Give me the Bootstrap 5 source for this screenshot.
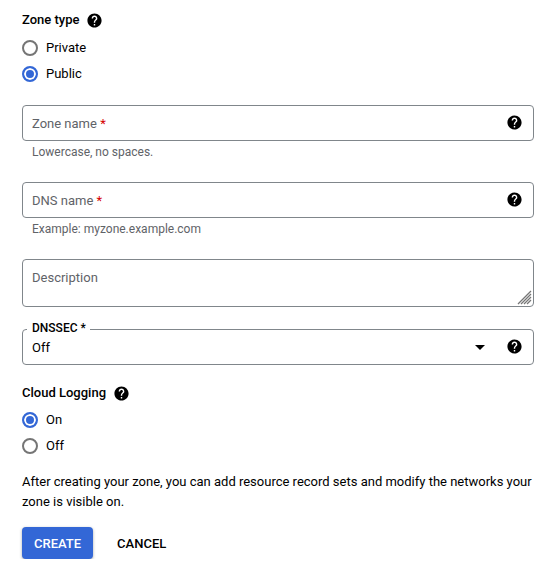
<!DOCTYPE html>
<html lang="en">
<head>
<meta charset="utf-8">
<title>Create a DNS zone</title>
<link href="https://cdn.jsdelivr.net/npm/bootstrap@5.3.0/dist/css/bootstrap.min.css" rel="stylesheet">
<style>
body{font-family:Roboto,"Liberation Sans",sans-serif;font-size:13px;line-height:20px;color:#000;background:#fff;}
.zone-form{padding:10px 11px 0 22px;}
.group-title{font-weight:500;height:20px;margin-bottom:8px;display:flex;align-items:center;gap:7px;}
.group-title .help-ico{margin-top:1px;}
.help-ico{width:17px;height:17px;fill:#000;flex:none;display:block;}
.radio-row{min-height:0;padding:0;margin:0 0 6px;height:20px;display:flex;align-items:center;gap:8px;}
.radio-row .form-check-input{float:none;margin:0;width:16px;height:16px;border:2px solid #757575;background:#fff;flex:none;}
.radio-row .form-check-input:checked{border-color:#3367d6;background:#3367d6;background-image:none;box-shadow:inset 0 0 0 2px #fff;}
.radio-row .form-check-label{font-size:13px;}
.zone-gap{margin-top:21px;}
.field-box{position:relative;}
.field-box .form-control,.field-box .form-select{font-size:13px;line-height:20px;color:#000;border:1px solid #80868b;border-radius:4px;padding:7px 9px;box-shadow:none;background-image:none;}
.field-box .form-select{padding:8px 9px 6px;}
.field-box input.form-control,.field-box .form-select{height:36px;}
.field-box textarea.form-control{display:block;height:48px;resize:none;min-height:48px;}
.field-lab{position:absolute;left:10px;top:9px;color:#5f6368;pointer-events:none;margin:0;}
.req-star{color:#d50000;}
.field-help{position:absolute;right:11px;top:9px;}
.hint-text{font-size:12px;line-height:16px;color:#5f6368;margin:3px 0 0 10px;height:22px;}
.notch-lab{position:absolute;left:5px;top:-9px;background:#fff;padding:0 4px 0 5px;font-size:12px;line-height:16px;font-weight:500;color:#000;}
.drop-caret{position:absolute;right:49px;top:16px;width:0;height:0;border-left:5px solid transparent;border-right:5px solid transparent;border-top:5px solid #000;}
.grip-mark{position:absolute;right:2px;bottom:2px;width:15px;height:15px;pointer-events:none;}
.sec-gap{margin-top:22px;}
.log-gap{margin-top:18px;margin-bottom:7px;}
.after-note{line-height:20px;margin:0 0 15px;}
.btn-row{gap:12px;}
.btn-make{font-size:13px;font-weight:500;line-height:20px;padding:7px 12px 5px;height:32px;background:#3367d6;color:#fff;border:0;border-radius:4px;box-shadow:0 1px 3px rgba(60,64,67,.45);}
.btn-make:hover{background:#3367d6;color:#fff;}
.btn-quit{font-size:13px;font-weight:500;line-height:20px;padding:7px 12px 5px;height:32px;color:#000;border:0;}
</style>
</head>
<body>
<svg width="0" height="0" class="position-absolute"><defs><symbol id="q-help" viewBox="0 0 24 24"><path d="M12 2C6.48 2 2 6.48 2 12s4.48 10 10 10 10-4.48 10-10S17.52 2 12 2zm1 17h-2v-2h2v2zm2.07-7.75l-.9.92C13.45 12.9 13 13.5 13 15h-2v-.5c0-1.1.45-2.1 1.17-2.83l1.24-1.26c.37-.36.59-.86.59-1.41 0-1.1-.9-2-2-2s-2 .9-2 2H8c0-2.21 1.79-4 4-4s4 1.79 4 4c0 .88-.36 1.68-.93 2.25z"/></symbol></defs></svg>
<form class="zone-form">
  <div class="group-title">Zone type <svg class="help-ico"><use href="#q-help"/></svg></div>
  <div class="form-check radio-row"><input class="form-check-input" type="radio" name="ztype" id="zp"><label class="form-check-label" for="zp">Private</label></div>
  <div class="form-check radio-row"><input class="form-check-input" type="radio" name="ztype" id="zq" checked><label class="form-check-label" for="zq">Public</label></div>

  <div class="field-box zone-gap">
    <input class="form-control" type="text" id="zn" aria-label="Zone name">
    <label class="field-lab" for="zn">Zone name <span class="req-star">*</span></label>
    <svg class="help-ico field-help"><use href="#q-help"/></svg>
  </div>
  <div class="hint-text">Lowercase, no spaces.</div>

  <div class="field-box mt-3">
    <input class="form-control" type="text" id="dn" aria-label="DNS name">
    <label class="field-lab" for="dn">DNS name <span class="req-star">*</span></label>
    <svg class="help-ico field-help"><use href="#q-help"/></svg>
  </div>
  <div class="hint-text">Example: myzone.example.com</div>

  <div class="field-box mt-3">
    <textarea class="form-control" id="ds" aria-label="Description"></textarea>
    <label class="field-lab" for="ds">Description</label>
    <svg class="grip-mark" viewBox="0 0 15 15"><path d="M14 1 1 14M14 4 4 14M14 7 7 14M14 10 10 14" stroke="#757575" stroke-width="1.3" fill="none"/></svg>
  </div>

  <div class="field-box sec-gap">
    <select class="form-select" id="sec" aria-label="DNSSEC"><option>Off</option></select>
    <label class="notch-lab" for="sec">DNSSEC *</label>
    <span class="drop-caret"></span>
    <svg class="help-ico field-help"><use href="#q-help"/></svg>
  </div>

  <div class="group-title log-gap">Cloud Logging <svg class="help-ico"><use href="#q-help"/></svg></div>
  <div class="form-check radio-row"><input class="form-check-input" type="radio" name="clog" id="co" checked><label class="form-check-label" for="co">On</label></div>
  <div class="form-check radio-row"><input class="form-check-input" type="radio" name="clog" id="cf"><label class="form-check-label" for="cf">Off</label></div>

  <p class="after-note mt-3">After creating your zone, you can add resource record sets and modify the networks your zone is visible on.</p>

  <div class="d-flex btn-row">
    <button type="button" class="btn btn-make">CREATE</button>
    <button type="button" class="btn btn-quit">CANCEL</button>
  </div>
</form>
</body>
</html>
